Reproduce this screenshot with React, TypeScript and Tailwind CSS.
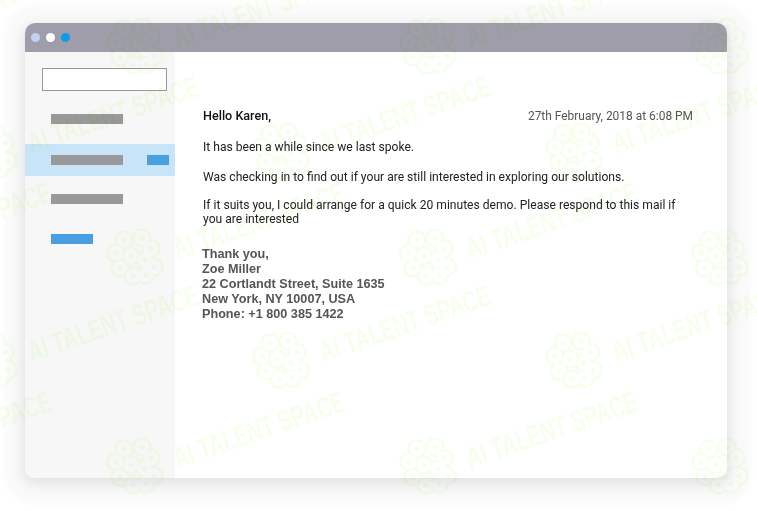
const marks = [
  ...[47, 258, 467].flatMap((y) => [-158, 135, 428, 720].map((x) => ({ x, y }))),
  ...[-57, 152, 361].flatMap((y) => [-11, 281, 574].map((x) => ({ x, y }))),
];

const lobes = [
  [18, 11],
  [36, 9],
  [45, 20],
  [10, 24],
  [25, 27],
  [39, 31],
  [48, 38],
  [14, 39],
  [27, 47],
  [40, 46],
];

function Brain() {
  return (
    <svg width="58" height="58" viewBox="0 0 58 58">
      {lobes.map(([cx, cy]) => (
        <circle key={`o${cx}${cy}`} cx={cx} cy={cy} r="10" fill="#f6ffee" />
      ))}
      {lobes.map(([cx, cy]) => (
        <circle key={`i${cx}${cy}`} cx={cx} cy={cy} r="7" fill="#fff" />
      ))}
      {lobes.map(([cx, cy]) => (
        <circle key={`d${cx}${cy}`} cx={cx} cy={cy} r="2.6" fill="#f6ffee" />
      ))}
    </svg>
  );
}

function Watermark() {
  return (
    <div className="pointer-events-none absolute inset-0 mix-blend-multiply">
      {marks.map((m) => (
        <div
          key={`${m.x}-${m.y}`}
          className="absolute"
          style={{ left: m.x, top: m.y }}
        >
          <div className="absolute -left-[29px] -top-[29px]">
            <Brain />
          </div>
          <span className="absolute left-[39px] -top-[26px] origin-left whitespace-nowrap font-['Liberation_Sans',sans-serif] text-[30px] leading-[36px] font-bold text-[#f6ffee] [transform:rotate(-19deg)_scaleX(0.68)]">
            AI TALENT SPACE
          </span>
        </div>
      ))}
    </div>
  );
}

export default function App() {
  return (
    <div className="relative h-[511px] w-[757px] overflow-hidden bg-white pl-[25px] pt-[23px]">
      <div className="flex h-[455px] w-[702px] flex-col overflow-hidden rounded-[10px] bg-white shadow-[0_4px_14px_2px_rgba(0,0,0,0.1),2px_4px_6px_22px_#fafafa]">
        <div className="flex h-[29px] shrink-0 items-center gap-[6px] bg-[#9e9da9] pl-[6px]">
          <span className="h-[9px] w-[9px] rounded-full bg-[#c3d0f5]" />
          <span className="h-[9px] w-[9px] rounded-full bg-white" />
          <span className="h-[9px] w-[9px] rounded-full bg-[#0f9be8]" />
        </div>
        <div className="flex min-h-0 flex-1">
          <aside className="flex w-[150px] shrink-0 flex-col bg-[#f7f7f7] pt-4">
            <div className="mx-[17px] h-[23px] w-[125px] border border-[#999] bg-white" />
            <div className="mt-[23px] ml-[26px] h-[10px] w-[72px] bg-[#999]" />
            <div className="mt-5 flex h-[32px] items-center bg-[#c8e4f9] pl-[26px] pr-[6px]">
              <div className="h-[10px] w-[72px] bg-[#999]" />
              <div className="ml-auto h-[10px] w-[22px] bg-[#4a9fe0]" />
            </div>
            <div className="mt-[18px] ml-[26px] h-[10px] w-[72px] bg-[#999]" />
            <div className="mt-[30px] ml-[26px] h-[10px] w-[42px] bg-[#4a9fe0]" />
          </aside>
          <main className="flex-1 pl-[28px] pr-[34px] pt-[57px] font-['Roboto',sans-serif] text-[12.1px] leading-[14px] text-[#222]">
            <div className="flex items-center justify-between">
              <span className="text-[12.6px] font-medium text-[#111]">Hello Karen,</span>
              <span className="text-[11.95px] text-[#555]">27th February, 2018 at 6:08 PM</span>
            </div>
            <p className="mt-[17px]">It has been a while since we last spoke.</p>
            <p className="mt-4">
              Was checking in to find out if your are still interested in
              exploring our solutions.
            </p>
            <p className="mt-[14px] max-w-[478px]">
              If it suits you, I could arrange for a quick 20 minutes demo.
              Please respond to this mail if you are interested
            </p>
            <div className="mt-[21px] -ml-px font-['Liberation_Sans',sans-serif] text-[12.65px] leading-[15px] font-bold text-[#555]">
              <div>Thank you,</div>
              <div>Zoe Miller</div>
              <div>22 Cortlandt Street, Suite 1635</div>
              <div>New York, NY 10007, USA</div>
              <div>Phone: +1 800 385 1422</div>
            </div>
          </main>
        </div>
      </div>
      <Watermark />
    </div>
  );
}
